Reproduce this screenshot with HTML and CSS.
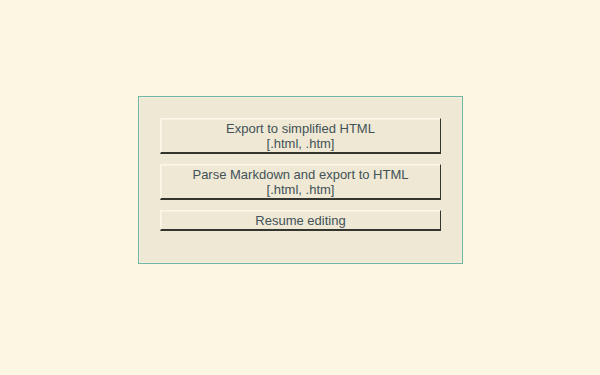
FILE: index.html
```html
<!DOCTYPE html>
<html lang="en">
<head>
    <meta charset="UTF-8">
    <title>Export</title>
    <link rel="stylesheet" href="styles.css">
</head>
<body>
    <div class="dialog">
        <button class="dlg-btn">Export to simplified HTML<br>[.html, .htm]</button>
        <button class="dlg-btn">Parse Markdown and export to HTML<br>[.html, .htm]</button>
        <button class="dlg-btn">Resume editing</button>
    </div>
</body>
</html>
```
FILE: styles.css
```css
body {
    margin: 0;
    height: 375px;
    background-color: #fdf6e3;
    font-family: 'Liberation Sans', Arial, sans-serif;
    display: flex;
    justify-content: center;
    align-items: flex-start;
}

.dialog {
    margin-top: 96px;
    margin-left: 1px;
    width: 281px;
    padding: 21px 21px 32px;
    background-color: #eee8d5;
    border: 1px solid #73b5a3;
    box-shadow: inset 0 0 0 1px #f3efe0;
    display: flex;
    flex-direction: column;
    gap: 10px;
}

.dlg-btn {
    display: block;
    width: 100%;
    margin: 0;
    padding: 2px 0 1px;
    font-family: inherit;
    font-size: 13px;
    line-height: 15px;
    color: #435257;
    background-color: #eee8d5;
    border-style: solid;
    border-width: 1px 1px 2px 1px;
    border-color: #fbf6e6 #35352f #35352f #fbf6e6;
    box-shadow: inset 1px 1px 0 #f6f1e1;
    text-align: center;
    cursor: pointer;
}
```
